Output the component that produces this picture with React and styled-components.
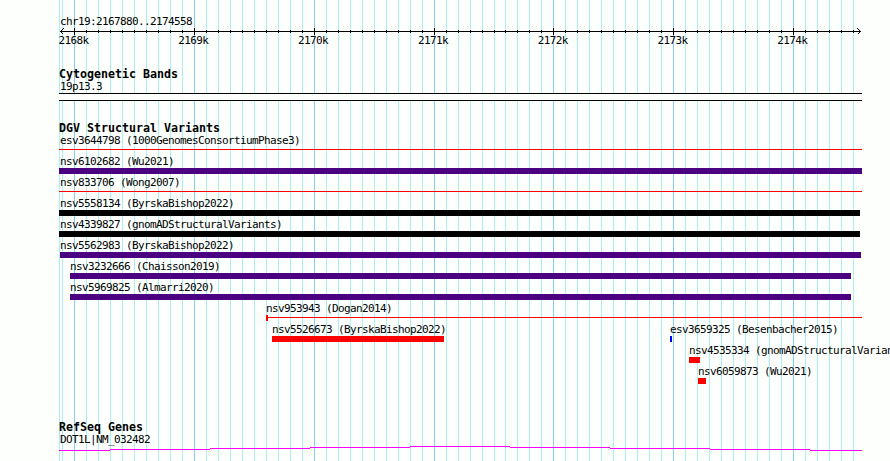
import React from "react";
import styled, { createGlobalStyle } from "styled-components";

const colors = {
    background: "#fdfffc",
    text: "#000000",
    gridMinor: "#afeeee",
    gridMajor: "#87ceeb",
    purple: "#4b0082",
    black: "#000000",
    red: "#ff0000",
    blue: "#0000ff",
    gene: "#ff00ff",
}

const GlobalStyle = createGlobalStyle`
    body {
        margin: 0;
        background-color: ${colors.background};
        overflow: hidden;
    }
`
const Browser = styled.div`
    position: relative;
    width: 890px;
    height: 461px;
    overflow: hidden;
    box-sizing: border-box;
    padding: 15px 0 0 59px;
    background-color: ${colors.background};
    color: ${colors.text};
    font-family: "DejaVu Sans Mono", "Liberation Mono", monospace;
    display: flex;
    flex-direction: column;
`
const Grid = styled.svg`
    position: absolute;
    top: 0;
    left: 0;
`
const Content = styled.div`
    position: relative;
    display: flex;
    flex-direction: column;
`
const Label = styled.div`
    height: 13px;
    line-height: 13px;
    font-size: 11px;
    letter-spacing: -0.622px;
    white-space: pre;
    padding-left: ${props => props.$indent || 0}px;
`
const Title = styled.div`
    height: 12px;
    line-height: 13px;
    font-size: 11.63px;
    font-weight: 700;
    white-space: pre;
`
const Ruler = styled.svg`
    display: block;
    height: 7px;
    width: 831px;
`
const RulerLabels = styled.div`
    display: flex;
    margin: -1px 0 0 -0.5px;
    height: 13px;
`
const RulerLabel = styled(Label)`
    flex: none;
    width: 119.8px;
`
const Track = styled.section`
    display: flex;
    flex-direction: column;
    margin-top: ${props => props.$gap}px;
`
const Band = styled.div`
    box-sizing: border-box;
    width: 803px;
    height: 8px;
    border-top: 1px solid ${colors.black};
    border-bottom: 1px solid ${colors.black};
    background-color: ${colors.background};
`
const Row = styled.div`
    display: flex;
    height: 21px;
`
const Feature = styled.div`
    flex: none;
    display: flex;
    flex-direction: column;
    width: ${props => props.$width}px;
    margin-left: ${props => props.$offset}px;
`
const Bar = styled.div`
    height: 6px;
    background-color: ${props => props.$color};
`
const Line = styled.div`
    height: 1px;
    margin: 2px 0 3px;
    background-color: ${props => props.$color};
`
const Capped = styled.div`
    display: flex;
    height: 6px;
`
const Cap = styled.div`
    width: 2px;
    background-color: ${colors.red};
`
const Tail = styled(Line)`
    flex: 1;
`
const Gene = styled.svg`
    display: block;
    width: 803px;
    height: 6px;
`

const rows = [
    [{ name: "esv3644798 (1000GenomesConsortiumPhase3)", start: 59, end: 862, type: "line", color: colors.red, indent: 1 }],
    [{ name: "nsv6102682 (Wu2021)", start: 59, end: 862, color: colors.purple, indent: 1 }],
    [{ name: "nsv833706 (Wong2007)", start: 59, end: 862, type: "line", color: colors.red, indent: 1 }],
    [{ name: "nsv5558134 (ByrskaBishop2022)", start: 59, end: 860, color: colors.black, indent: 1 }],
    [{ name: "nsv4339827 (gnomADStructuralVariants)", start: 59, end: 860, color: colors.black, indent: 1 }],
    [{ name: "nsv5562983 (ByrskaBishop2022)", start: 60, end: 861, color: colors.purple }],
    [{ name: "nsv3232666 (Chaisson2019)", start: 70, end: 851, color: colors.purple }],
    [{ name: "nsv5969825 (Almarri2020)", start: 70, end: 851, color: colors.purple }],
    [{ name: "nsv953943 (Dogan2014)", start: 266, end: 862, type: "capped", color: colors.red }],
    [
        { name: "nsv5526673 (ByrskaBishop2022)", start: 272, end: 444, color: colors.red },
        { name: "esv3659325 (Besenbacher2015)", start: 670, end: 672, color: colors.blue },
    ],
    [{ name: "nsv4535334 (gnomADStructuralVariants)", start: 689, end: 700, color: colors.red }],
    [{ name: "nsv6059873 (Wu2021)", start: 698, end: 706, color: colors.red }],
]

// one tick per 100 bases, a major one per 1k
const ticks = Array.from({ length: 67 }, (_, i) => ({
    x: Math.floor(74.7 + (i - 1) * 11.98),
    major: (i - 1) % 10 === 0,
}))

const genePath = [
    [0, 51, 4], [51, 151, 3], [151, 251, 2], [251, 351, 1], [351, 451, 0],
    [451, 551, 1], [551, 651, 2], [651, 751, 3], [751, 803, 4],
]

const Glyph = ({ type, color }) => {
    if (type === "line") return <Line $color={color}/>
    if (type === "capped") return <Capped><Cap/><Tail $color={color}/></Capped>
    return <Bar $color={color}/>
}

const App = () => {
    return (
        <Browser>
            <GlobalStyle/>
            <Grid width="890" height="461" shapeRendering="crispEdges">
                <rect x="59" y="0" width="1" height="461" fill={colors.gridMinor}/>
                {ticks.map(tick => (
                    <rect key={tick.x} x={tick.x} y="0" width="1" height="461" fill={tick.major ? colors.gridMajor : colors.gridMinor}/>
                ))}
            </Grid>
            <Content>
                <Label $indent={1}>chr19:2167880..2174558</Label>
                <Ruler viewBox="59 28 831 7" shapeRendering="crispEdges">
                    <rect x="60" y="31" width="801" height="1"/>
                    {ticks.slice(1).map(tick => (
                        <rect key={tick.x} x={tick.x} y={tick.major ? 28 : 30} width="1" height={tick.major ? 7 : 3}/>
                    ))}
                    <path d="M63.5 28.5L60.5 31.5L63.5 34.5M857.5 28.5L860.5 31.5L857.5 34.5" fill="none" stroke="#000"/>
                </Ruler>
                <RulerLabels>
                    {["2168k", "2169k", "2170k", "2171k", "2172k", "2173k", "2174k"].map(text => (
                        <RulerLabel key={text}>{text}</RulerLabel>
                    ))}
                </RulerLabels>

                <Track $gap={21}>
                    <Title>Cytogenetic Bands</Title>
                    <Label $indent={1}>19p13.3</Label>
                    <Band/>
                </Track>

                <Track $gap={21}>
                    <Title>DGV Structural Variants</Title>
                    {rows.map((row, i) => (
                        <Row key={i}>
                            {row.map((item, j) => (
                                <Feature
                                    key={item.name}
                                    $width={item.end - item.start}
                                    $offset={item.start - (j ? row[j - 1].end : 59)}
                                >
                                    <Label $indent={item.indent}>{item.name}</Label>
                                    <Glyph type={item.type} color={item.color}/>
                                </Feature>
                            ))}
                        </Row>
                    ))}
                </Track>

                <Track $gap={35}>
                    <Title>RefSeq Genes</Title>
                    <Label $indent={1}>DOT1L|NM_032482</Label>
                    <Gene viewBox="0 0 803 6" shapeRendering="crispEdges">
                        {genePath.map(([start, end, y]) => (
                            <rect key={start} x={start} y={y} width={end - start} height="1" fill={colors.gene}/>
                        ))}
                    </Gene>
                </Track>
            </Content>
        </Browser>
    );
}

export default App;
